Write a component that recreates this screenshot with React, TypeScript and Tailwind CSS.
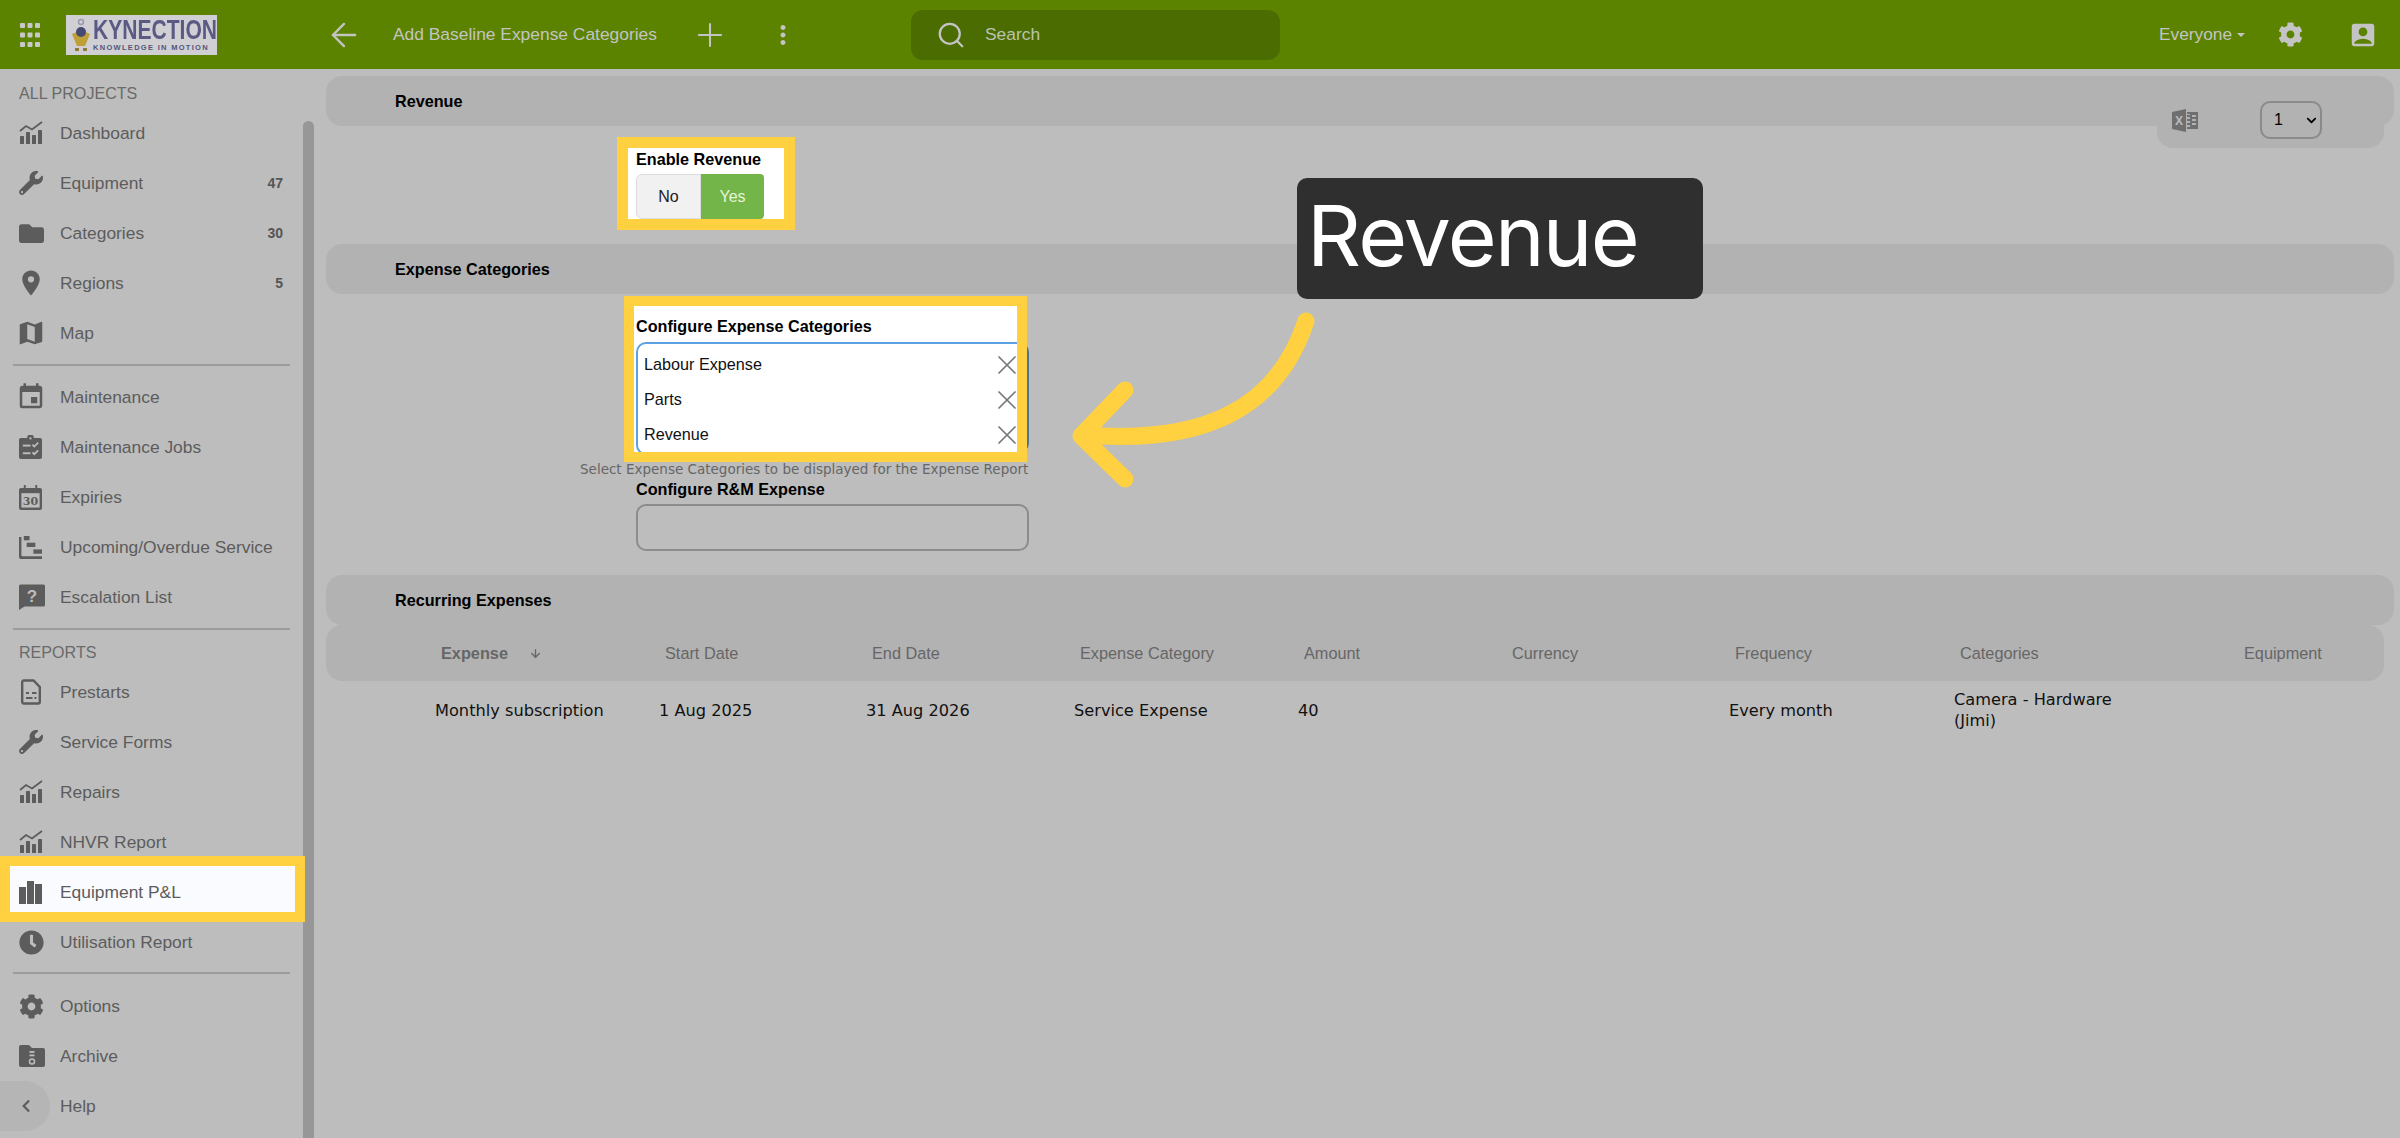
import React from 'react';
import { ArrowDown, ArrowLeft, Plus, Search, X } from 'lucide-react';
import { FaChevronDown, FaChevronLeft, FaClock, FaCog, FaFolder, FaWrench } from 'react-icons/fa';
import { MdAccountBox, MdEvent, MdMoreVert, MdPlace } from 'react-icons/md';

const BG = '#bdbdbd';

const ChartIcon = () => (
  <svg width="24" height="24" viewBox="0 0 24 24" fill="currentColor">
    <rect x="1" y="15" width="4" height="8" rx="0.5" />
    <rect x="7" y="11" width="4" height="12" rx="0.5" />
    <rect x="13" y="14" width="4" height="9" rx="0.5" />
    <rect x="19" y="9" width="4" height="14" rx="0.5" />
    <polyline points="1,10 7,5 13,8.5 23,1" fill="none" stroke="currentColor" strokeWidth="1.8" />
  </svg>
);

const BarsIcon = () => (
  <svg width="23" height="23" viewBox="0 0 23 23" fill="currentColor">
    <rect x="0" y="6" width="7" height="17" />
    <rect x="8" y="0" width="7" height="23" />
    <rect x="16" y="3" width="7" height="20" />
  </svg>
);

const MapIcon = () => (
  <svg width="30" height="30" viewBox="0 0 24 24" fill="currentColor" className="ml-[-3px]">
    <path d="M15,19L9,16.89V5L15,7.11M20.5,3C20.44,3 20.39,3 20.34,3L15,5.1L9,3L3.36,4.9C3.15,4.97 3,5.15 3,5.38V20.5A0.5,0.5 0 0,0 3.5,21C3.55,21 3.61,21 3.66,20.97L9,18.9L15,21L20.64,19.1C20.85,19 21,18.85 21,18.62V3.5A0.5,0.5 0 0,0 20.5,3Z" />
  </svg>
);

const JobsIcon = () => (
  <svg width="23" height="25" viewBox="0 0 24 26" fill="currentColor">
    <path d="M2 3h6.500a3.500 3.500 0 0 1 7 0H22a2 2 0 0 1 2 2v18a2 2 0 0 1-2 2H2a2 2 0 0 1-2-2V5a2 2 0 0 1 2-2z" />
    <circle cx="12" cy="3.500" r="1.200" fill={BG} />
    <rect x="4" y="10" width="8" height="2" fill={BG} />
    <rect x="4" y="18" width="8" height="2" fill={BG} />
    <polyline points="14,10 16,12 20,8" fill="none" stroke={BG} strokeWidth="1.8" />
    <polyline points="14,18 16,20 20,16" fill="none" stroke={BG} strokeWidth="1.8" />
  </svg>
);

const ExpiryIcon = () => (
  <svg width="23" height="25" viewBox="0 0 24 26" fill="currentColor">
    <path d="M5 0h2v3h10V0h2v3h3a2 2 0 0 1 2 2v19a2 2 0 0 1-2 2H2a2 2 0 0 1-2-2V5a2 2 0 0 1 2-2h3z" />
    <rect x="2.500" y="8.500" width="19" height="15" fill={BG} />
    <text x="12" y="21" textAnchor="middle" fontSize="11.500" fontWeight="700" fontFamily="'DejaVu Serif', serif" fill="currentColor">30</text>
  </svg>
);

const GanttIcon = () => (
  <svg width="23" height="23" viewBox="0 0 24 24" fill="currentColor">
    <path d="M0 1h2.500v19a1 1 0 0 0 1 1H24v3H2a2 2 0 0 1-2-2z" />
    <rect x="5" y="0" width="6" height="4.500" />
    <rect x="8" y="7" width="9" height="4.500" />
    <rect x="15" y="14" width="9" height="4.500" />
  </svg>
);

const HelpBubbleIcon = () => (
  <svg width="26" height="26" viewBox="0 0 26 26" fill="currentColor">
    <path d="M0 2a1.500 1.500 0 0 1 1.500-1.500h23A1.500 1.500 0 0 1 26 2v19a1.500 1.500 0 0 1-1.500 1.500H5.500L0 26z" />
    <text x="13" y="18" textAnchor="middle" fontSize="17" fontWeight="700" fontFamily="'Liberation Sans', sans-serif" fill={BG}>?</text>
  </svg>
);

const FileIcon = () => (
  <svg width="20" height="26" viewBox="0 0 20 26" fill="none" stroke="currentColor" strokeWidth="2.4">
    <path d="M3 1.500h9.500L18.800 8v15a1.500 1.500 0 0 1-1.500 1.500H3A1.500 1.500 0 0 1 1.200 23V3A1.500 1.500 0 0 1 3 1.500z" />
    <path d="M5 14h3M11 14h4.500M5 19h6.500M13.500 19h2" strokeWidth="2" />
  </svg>
);

const ArchiveIcon = () => (
  <svg width="26" height="22" viewBox="0 0 26 22" fill="currentColor">
    <path d="M2 0h8l3 3h11a2 2 0 0 1 2 2v15a2 2 0 0 1-2 2H2a2 2 0 0 1-2-2V2a2 2 0 0 1 2-2z" />
    <rect x="10.500" y="6" width="5" height="1.800" fill={BG} />
    <rect x="10.500" y="9.500" width="5" height="1.800" fill={BG} />
    <circle cx="13" cy="16.500" r="2.500" fill="none" stroke={BG} strokeWidth="1.500" />
  </svg>
);

const ExcelIcon = () => (
  <svg width="26" height="23" viewBox="0 0 26 23" fill="#6f6f6f">
    <path d="M0 3l14-3v23L0 20z" />
    <text x="7" y="16" textAnchor="middle" fontSize="12" fontWeight="700" fontFamily="'Liberation Sans', sans-serif" fill={BG}>X</text>
    <path d="M15 3h11v17H15v-2h3v-2h-3v-2h3v-2h-3v-2h3V8h-3V6h3V5h-3zM20 6v2h4V6zM20 10v2h4v-2zM20 14v2h4v-2z" fillRule="evenodd" />
  </svg>
);

const AppsIcon = () => (
  <svg width="20" height="24" viewBox="0 0 20 24" fill="#c8c8c8">
    {[2.500, 10, 17.500].map((x) =>
      [2.500, 12, 21.500].map((y) => <rect key={`${x}-${y}`} x={x - 2.500} y={y - 2.500} width="5" height="5" rx="1" />)
    )}
  </svg>
);

const Logo = () => (
  <div className="w-[151px] h-[40px] bg-[#d0d0d4] flex items-center pl-[3px] blur-[0.6px]">
    <svg width="24" height="34" viewBox="0 0 24 34" className="shrink-0">
      <path d="M3 16l9-4 9 4-5 12h-8z" fill="#bf9f38" />
      <circle cx="12" cy="14" r="5" fill="#474a74" />
      <circle cx="12" cy="4" r="2.500" fill="none" stroke="#9a9ab0" strokeWidth="1.500" />
      <path d="M6 30h4v3H6zM14 30h4v3h-4z" fill="#8f7b3c" />
    </svg>
    <div className="w-[124px] shrink-0 flex flex-col items-start">
      <div className="text-[27px] leading-[25px] font-bold text-[#5a5a85] whitespace-nowrap origin-left scale-x-[0.78]">KYNECTION</div>
      <div className="text-[7.500px] leading-[9px] font-bold text-[#55557a] tracking-[1.300px] whitespace-nowrap">KNOWLEDGE IN MOTION</div>
    </div>
  </div>
);

interface NavEntry {
  label: string;
  icon: React.ReactNode;
  count?: string;
}

const projectNav: NavEntry[] = [
  { label: 'Dashboard', icon: <ChartIcon /> },
  { label: 'Equipment', icon: <FaWrench size={24} />, count: '47' },
  { label: 'Categories', icon: <FaFolder size={25} />, count: '30' },
  { label: 'Regions', icon: <MdPlace size={30} className="ml-[-3px]" />, count: '5' },
  { label: 'Map', icon: <MapIcon /> },
];

const serviceNav: NavEntry[] = [
  { label: 'Maintenance', icon: <MdEvent size={30} className="ml-[-3px]" /> },
  { label: 'Maintenance Jobs', icon: <JobsIcon /> },
  { label: 'Expiries', icon: <ExpiryIcon /> },
  { label: 'Upcoming/Overdue Service', icon: <GanttIcon /> },
  { label: 'Escalation List', icon: <HelpBubbleIcon /> },
];

const NavRow = ({ label, icon, count }: NavEntry) => (
  <div className="h-[50px] flex items-center pl-[19px] pr-[20px] text-[17.400px] text-[#5c5c5c]">
    <span className="w-[41px] shrink-0 flex items-center">{icon}</span>
    <span className="flex-1 whitespace-nowrap">{label}</span>
    {count && <span className="text-[14px] font-bold text-[#555]">{count}</span>}
  </div>
);

const Divider = ({ className }: { className: string }) => (
  <div className={`h-[2px] bg-[#9c9c9c] ml-[13px] w-[277px] ${className}`} />
);

const Sidebar = () => (
  <aside className="w-[314px] shrink-0 flex">
    <nav className="w-[303px] shrink-0 pt-[14px]">
      <div className="h-[25px] pl-[19px] leading-[20px] text-[16.100px] text-[#6a6a6a]">ALL PROJECTS</div>
      {projectNav.map((item) => (
        <NavRow key={item.label} {...item} />
      ))}
      <Divider className="mt-[6px] mb-[6px]" />
      {serviceNav.map((item) => (
        <NavRow key={item.label} {...item} />
      ))}
      <Divider className="mt-[6px]" />
      <div className="h-[37px] pl-[19px] pt-[12px] leading-[20px] text-[16.100px] text-[#6a6a6a]">REPORTS</div>
      <NavRow label="Prestarts" icon={<span className="ml-[2px] flex"><FileIcon /></span>} />
      <NavRow label="Service Forms" icon={<FaWrench size={24} />} />
      <NavRow label="Repairs" icon={<ChartIcon />} />
      <NavRow label="NHVR Report" icon={<ChartIcon />} />
      <div className="relative">
        <div className="absolute left-0 top-[-11px] w-[305px] h-[66px] border-[10px] border-[#ffd040] bg-[#fafbff]" />
        <div className="relative">
          <NavRow label="Equipment P&L" icon={<BarsIcon />} />
        </div>
      </div>
      <NavRow label="Utilisation Report" icon={<FaClock size={25} />} />
      <Divider className="mt-[5px] mb-[7px]" />
      <NavRow label="Options" icon={<FaCog size={25} />} />
      <NavRow label="Archive" icon={<ArchiveIcon />} />
      <div className="relative">
        <div className="absolute left-0 top-0 w-[50px] h-[50px] rounded-r-full bg-[#b5b5b5]" />
        <div className="relative">
          <NavRow label="Help" icon={<FaChevronLeft size={14} />} />
        </div>
      </div>
    </nav>
    <div className="w-[11px] mt-[52px] rounded-t-md bg-[#979797]" />
  </aside>
);

const SectionBar = ({ title }: { title: string }) => (
  <div className="h-[50px] rounded-2xl bg-[#b2b2b2] pl-[69px] flex items-center text-[16.200px] font-bold text-black">
    {title}
  </div>
);

const EnableRevenue = () => (
  <div className="h-[118px] pl-[310px] pt-[23px]">
    <div className="relative w-fit">
      <div className="absolute left-[-19px] top-[-12px] w-[178px] h-[93px] border-[11px] border-[#ffd040] bg-white" />
      <div className="relative">
        <div className="h-[20px] leading-[20px] text-[16.200px] font-bold text-black">Enable Revenue</div>
        <div className="mt-[5px] flex h-[45px] text-[16px]">
          <div className="w-[65px] flex items-center justify-center rounded-l-md bg-[#f1f1f1] border border-[#dcdcdc] text-[#222]">No</div>
          <div className="w-[63px] flex items-center justify-center rounded-r-sm bg-[#73b548] text-[#e8f4d8]">Yes</div>
        </div>
      </div>
    </div>
  </div>
);

const selected = ['Labour Expense', 'Parts', 'Revenue'];

const ExpenseConfig = () => (
  <div className="h-[281px] pl-[310px] pt-[22px]">
    <div className="relative w-[393px]">
      <div className="absolute left-[-12px] top-[-20px] w-[403px] h-[166px] z-10 border-[10px] border-[#ffd040] bg-white overflow-hidden">
        <div className="absolute left-[2px] top-[36px] w-[393px] h-[113px] rounded-[10px] border-2 border-[#5ba2e4]" />
      </div>
      <div className="relative z-20 h-[20px] leading-[20px] text-[16.200px] font-bold text-black">Configure Expense Categories</div>
      <div className="relative mt-[6px] h-[111px] rounded-[10px] border-2 border-[#4f7592] pt-[3px] pl-[6px]">
        {selected.map((name) => (
          <div key={name} className="relative z-20 h-[35px] flex items-center justify-between pr-[4px] text-[16.200px] text-[#111]">
            <span>{name}</span>
            <X size={32} strokeWidth={1.300} className="text-[#777]" />
          </div>
        ))}
      </div>
      <div className="mt-[8px] ml-[-56px] h-[16px] leading-[16px] whitespace-nowrap text-[13.500px] text-[#666] font-['DejaVu_Sans',sans-serif]">
        Select Expense Categories to be displayed for the Expense Report
      </div>
      <div className="mt-[2px] h-[20px] leading-[20px] text-[16.200px] font-bold text-black">Configure R&amp;M Expense</div>
      <div className="mt-[5px] h-[47px] rounded-[10px] border-2 border-[#8c8c8c]" />
    </div>
  </div>
);

const headers = ['Start Date', 'End Date', 'Expense Category', 'Amount', 'Currency', 'Frequency', 'Categories', 'Equipment'];

const RecurringTable = () => (
  <div className="mr-[10px]">
    <div className="h-[56px] rounded-2xl bg-[#b2b2b2] pl-[115px] grid grid-cols-[224px_207px_208px_224px_208px_223px_225px_284px_1fr] items-center text-[16.300px] text-[#666]">
      <div className="flex items-center gap-[21px]">
        <span className="font-bold">Expense</span>
        <ArrowDown size={13} strokeWidth={2.500} />
      </div>
      {headers.map((h) => (
        <div key={h}>{h}</div>
      ))}
    </div>
    <div className="h-[58px] pl-[109px] grid grid-cols-[224px_207px_208px_224px_208px_223px_225px_284px_1fr] items-center text-[16.200px] leading-[21px] text-[#111] font-['DejaVu_Sans',sans-serif]">
      <div>Monthly subscription</div>
      <div>1 Aug 2025</div>
      <div>31 Aug 2026</div>
      <div>Service Expense</div>
      <div>40</div>
      <div />
      <div>Every month</div>
      <div className="w-[190px]">Camera - Hardware (Jimi)</div>
      <div />
    </div>
  </div>
);

const App = () => (
  <div className="relative w-[2400px] h-[1138px] overflow-hidden flex flex-col bg-[#bdbdbd] font-['Liberation_Sans',sans-serif]">
    <header className="h-[69px] shrink-0 bg-[#5b8300] flex items-center text-[#c4c4c4]">
      <div className="w-[66px] pl-[20px] flex">
        <AppsIcon />
      </div>
      <Logo />
      <ArrowLeft size={38} strokeWidth={1.500} className="ml-[108px]" />
      <div className="ml-[30px] w-[298px] text-[17.400px] whitespace-nowrap">Add Baseline Expense Categories</div>
      <Plus size={38} strokeWidth={1.300} />
      <MdMoreVert size={30} className="ml-[39px]" />
      <div className="ml-[113px] w-[369px] h-[50px] rounded-xl bg-[#4b6c00] flex items-center pl-[25px] gap-[19px] text-[17.400px]">
        <Search size={30} strokeWidth={1.800} />
        <span className="text-[#b9c4b0]">Search</span>
      </div>
      <div className="ml-auto flex items-center pr-[22px]">
        <span className="text-[17.300px]">Everyone</span>
        <span className="ml-[5px] w-0 h-0 border-x-[4px] border-x-transparent border-t-[4px] border-t-[#c4c4c4]" />
        <FaCog size={25} className="ml-[33px]" />
        <MdAccountBox size={30} className="ml-[45px]" />
      </div>
    </header>
    <div className="flex-1 flex min-h-0">
      <Sidebar />
      <main className="flex-1 min-w-0 pl-[12px] pr-[6px] pt-[7px]">
        <SectionBar title="Revenue" />
        <EnableRevenue />
        <SectionBar title="Expense Categories" />
        <ExpenseConfig />
        <SectionBar title="Recurring Expenses" />
        <RecurringTable />
      </main>
    </div>

    {/* export / page-size panel sits over the revenue bar */}
    <div className="absolute left-[2157px] top-[92px] w-[227px] h-[56px] rounded-b-2xl bg-[#b2b2b2] flex items-center pl-[15px]">
      <ExcelIcon />
      <div className="ml-[62px] w-[62px] h-[38px] rounded-[10px] border-2 border-[#8a8a8a] flex items-center justify-between pl-[12px] pr-[3px] text-[16px] text-black">
        1
        <FaChevronDown size={11} />
      </div>
    </div>

    {/* walkthrough callout */}
    <div className="absolute left-[1297px] top-[178px] w-[406px] h-[121px] rounded-[10px] bg-[#2f2f2f] flex items-center pl-[10px] pb-[6px] text-white text-[84px] tracking-[-1.700px] font-['Inter',sans-serif]">
      Revenue
    </div>
    <svg className="absolute left-[1050px] top-[300px]" width="280" height="200" viewBox="0 0 280 200" fill="none" stroke="#ffd040" strokeWidth="17" strokeLinecap="round" strokeLinejoin="round">
      <path d="M256 21C226 112 150 144 34 135" />
      <path d="M75 90L31 136L75 179" />
    </svg>
  </div>
);

export default App;
